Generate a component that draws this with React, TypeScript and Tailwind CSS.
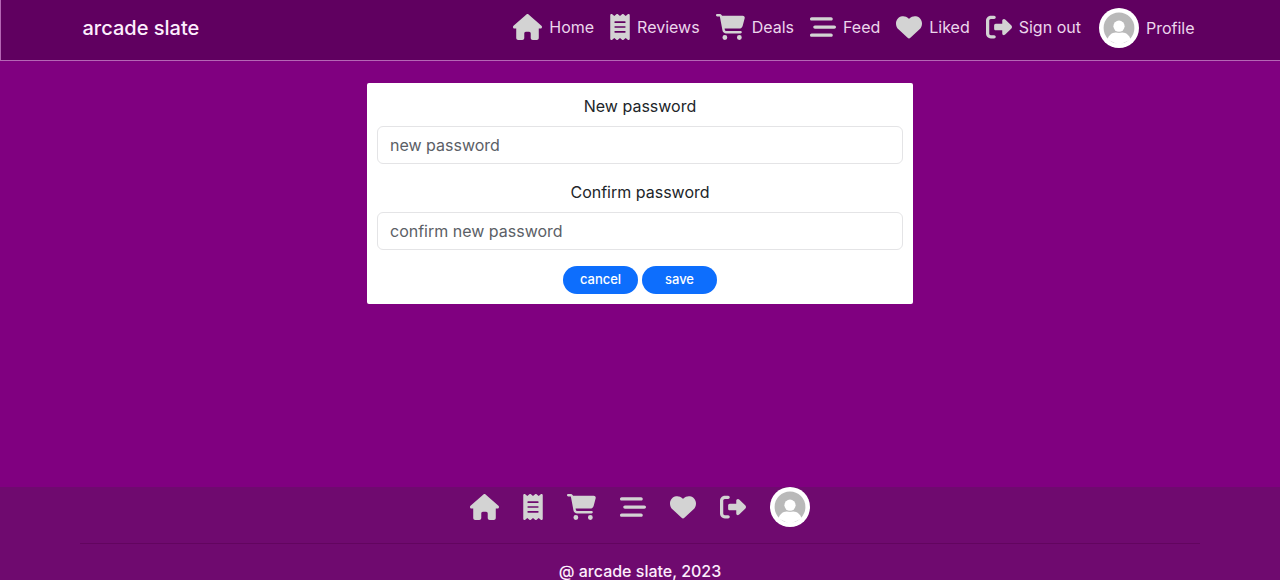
import type { ReactNode } from "react";
import {
  FaBarsStaggered,
  FaCartShopping,
  FaHeart,
  FaHouse,
  FaReceipt,
  FaRightFromBracket,
} from "react-icons/fa6";

function Avatar() {
  return (
    <svg viewBox="0 0 40 40" className="h-10 w-10 shrink-0" aria-hidden="true">
      <circle cx="20" cy="20" r="20" fill="#fff" />
      <circle cx="20" cy="20" r="15.4" fill="#b9b9b9" />
      <path d="M8.4 31.500C9.600 27.400 13 24.600 16.500 24.600h7c3.500 0 6.900 2.800 8.100 6.900L20 37z" fill="#fff" />
      <circle cx="20" cy="18.200" r="6.500" fill="#b9b9b9" />
      <circle cx="20" cy="18.200" r="5.600" fill="#fff" />
    </svg>
  );
}

const links: { label: string; icon: ReactNode }[] = [
  { label: "Home", icon: <FaHouse className="h-[26px] w-[29px] shrink-0" /> },
  { label: "Reviews", icon: <FaReceipt className="h-[26px] w-5 shrink-0" /> },
  { label: "Deals", icon: <FaCartShopping className="h-[26px] w-[29px] shrink-0" /> },
  { label: "Feed", icon: <FaBarsStaggered className="h-[26px] w-[26px] shrink-0" /> },
  { label: "Liked", icon: <FaHeart className="h-[26px] w-[26px] shrink-0" /> },
  { label: "Sign out", icon: <FaRightFromBracket className="h-[26px] w-[26px] shrink-0" /> },
  { label: "Profile", icon: <Avatar /> },
];

function Field({ id, label, placeholder }: { id: string; label: string; placeholder: string }) {
  return (
    <div className="mb-4 flex flex-col gap-2">
      <label htmlFor={id} className="text-center text-base leading-6 text-[#212529]">
        {label}
      </label>
      <input
        id={id}
        type="password"
        placeholder={placeholder}
        className="h-[38px] w-full rounded-md border border-[#e4e4e6] bg-white px-3 text-base text-[#212529] placeholder:text-[#5b6066]"
      />
    </div>
  );
}

export default function App() {
  return (
    <div className="flex min-h-screen flex-col bg-[#800080] font-['Inter','Liberation_Sans',sans-serif]">
      <header className="border-b border-l border-[#b565b5] bg-[#600060]">
        <div className="mx-auto flex h-[60px] max-w-[1140px] items-center justify-between pb-1 pl-3 pr-4">
          <a href="#home" className="text-xl font-medium text-[#fdeefd]">
            arcade slate
          </a>
          <nav aria-label="Main" className="flex items-center gap-4">
            {links.map(({ label, icon }) => (
              <a
                key={label}
                href={`#${label.toLowerCase().replace(" ", "-")}`}
                className="flex items-center gap-[7px] whitespace-nowrap text-base text-[#ecd6ec] not-last:pb-0.5 last:ml-0.5"
              >
                <span className="text-[#d3d3d3]">{icon}</span>
                <span className="leading-6">{label}</span>
              </a>
            ))}
          </nav>
        </div>
      </header>

      <main className="flex-1 px-4 pt-[22px] pb-6">
        <form
          className="mx-auto max-w-[546px] rounded-xs bg-white px-[10px] pt-[11px] pb-[10px]"
          onSubmit={(event) => event.preventDefault()}
        >
          <Field id="new-password" label="New password" placeholder="new password" />
          <Field id="confirm-password" label="Confirm password" placeholder="confirm new password" />
          <div className="flex justify-center gap-1">
            <button type="button" className="h-7 w-[75px] rounded-full bg-[#0d6efd] text-[13px] font-medium text-white">
              cancel
            </button>
            <button type="submit" className="h-7 w-[75px] rounded-full bg-[#0d6efd] text-[13px] font-medium text-white">
              save
            </button>
          </div>
        </form>
      </main>

      <footer className="bg-[#6f0a6f]">
        <div className="mx-auto max-w-[1120px]">
          <nav aria-label="Footer" className="flex items-center justify-center gap-6 text-[#d3d3d3]">
            {links.map(({ label, icon }) => (
              <a key={label} href={`#${label.toLowerCase().replace(" ", "-")}`} aria-label={label}>
                {icon}
              </a>
            ))}
          </nav>
          <hr className="mt-4 mb-[18px] border-[#62055f]" />
          <p className="text-center text-base leading-[18px] font-medium text-[#fdeefd]">@ arcade slate, 2023</p>
        </div>
      </footer>
    </div>
  );
}
